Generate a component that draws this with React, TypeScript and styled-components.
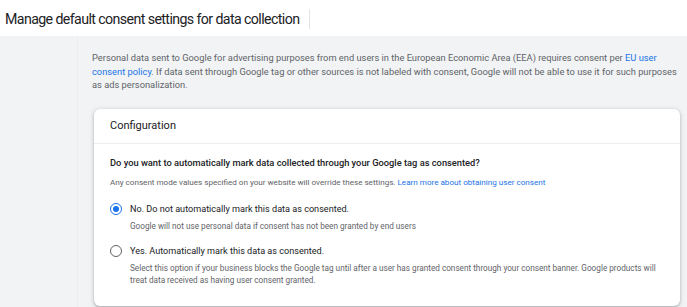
import React from "react";
import styled, { createGlobalStyle } from "styled-components";

const Global = createGlobalStyle`
  html, body { margin: 0; padding: 0; background: #f1f3f4; }
  body { font-family: Roboto, "Noto Sans", Arial, sans-serif; -webkit-font-smoothing: antialiased; }
  * { box-sizing: border-box; }
`;

const Page = styled.div`
  width: 687px;
  height: 307px;
  display: flex;
  flex-direction: column;
  overflow: hidden;
  background: #f1f3f4;
`;

const Header = styled.header`
  height: 36px;
  flex: none;
  background: #fff;
  display: flex;
  align-items: center;
  padding-left: 5px;
  padding-top: 2px;
`;

const Title = styled.h1`
  margin: 0;
  font-size: 14.2px;
  font-weight: 400;
  color: #202124;
  letter-spacing: -0.6px;
  padding-right: 10px;
  border-right: 1px solid #e3e3e3;
  line-height: 20px;
`;

const Body = styled.div`
  flex: 1;
  display: flex;
`;

const Rail = styled.div`
  width: 78px;
  flex: none;
  border-right: 1px solid #ebedee;
`;

const Main = styled.main`
  flex: 1;
  padding: 15px 5px 0 14px;
  display: flex;
  flex-direction: column;
  gap: 17px;
`;

const Intro = styled.p`
  margin: 0;
  font-size: 9.3px;
  line-height: 13.5px;
  color: #5f6368;
`;

const Link = styled.a`
  color: #1a73e8;
  text-decoration: none;
`;

const Card = styled.section`
  background: #fff;
  border-radius: 6px;
  box-shadow: 0 1px 2px rgba(60, 64, 67, 0.3), 0 1px 4px 1px rgba(60, 64, 67, 0.15);
  margin-left: 2px;
  margin-right: 2px;
`;

const CardHead = styled.div`
  height: 35px;
  display: flex;
  align-items: center;
  padding-left: 16px;
  border-bottom: 1px solid #eceef0;
  font-size: 11px;
  color: #202124;
`;

const CardBody = styled.div`
  padding: 12px 16px 20px 16px;
  display: flex;
  flex-direction: column;
`;

const Question = styled.div`
  font-size: 9.3px;
  font-weight: 500;
  color: #202124;
  line-height: 14px;
`;

const Hint = styled.div`
  font-size: 8.1px;
  color: #5f6368;
  line-height: 12px;
  margin-top: 6px;
  margin-bottom: 14px;
`;

const Options = styled.div`
  display: flex;
  flex-direction: column;
  gap: 12px;
`;

const Option = styled.label`
  display: grid;
  grid-template-columns: 14px 1fr;
  column-gap: 6px;
  align-items: start;
`;

const Radio = styled.span<{ $checked?: boolean }>`
  width: 12px;
  height: 12px;
  margin-top: 1px;
  border-radius: 50%;
  border: 1.5px solid ${(p) => (p.$checked ? "#1a73e8" : "#5f6368")};
  display: flex;
  align-items: center;
  justify-content: center;
  &::after {
    content: "";
    width: 6px;
    height: 6px;
    border-radius: 50%;
    background: ${(p) => (p.$checked ? "#1a73e8" : "transparent")};
  }
`;

const OptText = styled.div`
  display: flex;
  flex-direction: column;
`;

const OptLabel = styled.div`
  font-size: 9.1px;
  color: #202124;
  line-height: 14px;
`;

const OptDesc = styled.div`
  font-size: 8.2px;
  color: #5f6368;
  line-height: 12px;
  margin-top: 4px;
`;

export default function App() {
  return (
    <>
      <Global />
      <Page>
        <Header>
          <Title>Manage default consent settings for data collection</Title>
        </Header>
        <Body>
          <Rail />
          <Main>
            <Intro>
              Personal data sent to Google for advertising purposes from end users in the European Economic Area (EEA) requires consent per{" "}
              <Link href="#">EU user consent policy</Link>. If data sent through Google tag or other sources is not labeled with consent, Google will not be able to use it for such purposes as ads personalization.
            </Intro>
            <Card>
              <CardHead>Configuration</CardHead>
              <CardBody>
                <Question>Do you want to automatically mark data collected through your Google tag as consented?</Question>
                <Hint>
                  Any consent mode values specified on your website will override these settings.{" "}
                  <Link href="#">Learn more about obtaining user consent</Link>
                </Hint>
                <Options>
                  <Option>
                    <Radio $checked />
                    <OptText>
                      <OptLabel>No. Do not automatically mark this data as consented.</OptLabel>
                      <OptDesc>Google will not use personal data if consent has not been granted by end users</OptDesc>
                    </OptText>
                  </Option>
                  <Option>
                    <Radio />
                    <OptText>
                      <OptLabel>Yes. Automatically mark this data as consented.</OptLabel>
                      <OptDesc>
                        Select this option if your business blocks the Google tag until after a user has granted consent through your consent banner. Google products will treat data received as having user consent granted.
                      </OptDesc>
                    </OptText>
                  </Option>
                </Options>
              </CardBody>
            </Card>
          </Main>
        </Body>
      </Page>
    </>
  );
}
